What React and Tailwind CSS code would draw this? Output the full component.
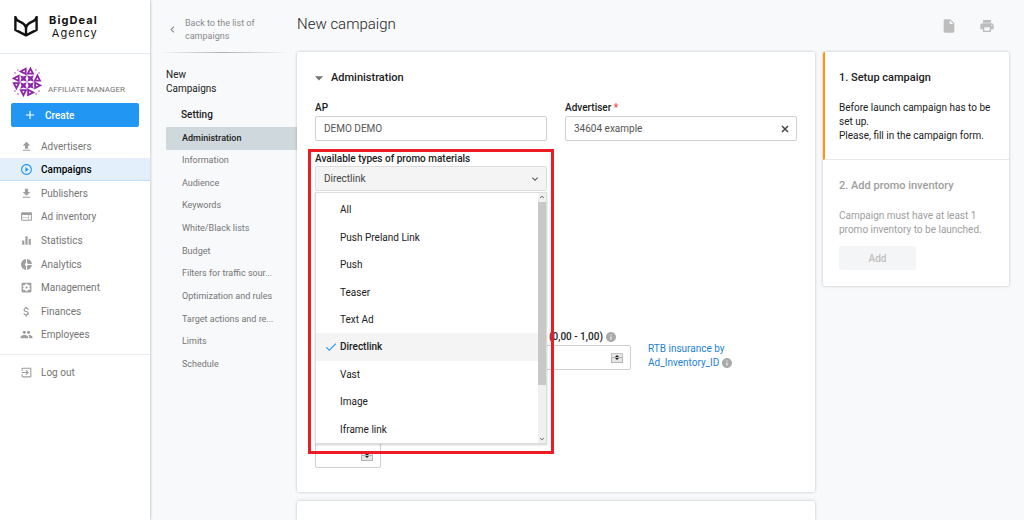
import { useState } from "react";
import {
  MdUpload, MdPlayCircleOutline, MdGetApp, MdWeb, MdEqualizer, MdDonutSmall,
  MdSettingsApplications, MdAttachMoney, MdPeople, MdExitToApp, MdAdd,
  MdArrowDropDown, MdInfo, MdInsertDriveFile, MdPrint, MdCheck,
  MdKeyboardArrowDown, MdKeyboardArrowUp, MdKeyboardArrowLeft,
} from "react-icons/md";

const NAV = [
  ["Advertisers", MdUpload],
  ["Campaigns", MdPlayCircleOutline],
  ["Publishers", MdGetApp],
  ["Ad inventory", MdWeb],
  ["Statistics", MdEqualizer],
  ["Analytics", MdDonutSmall],
  ["Management", MdSettingsApplications],
  ["Finances", MdAttachMoney],
  ["Employees", MdPeople],
];

const SECTIONS = [
  "Administration", "Information", "Audience", "Keywords", "White/Black lists", "Budget",
  "Filters for traffic sour...", "Optimization and rules", "Target actions and re...", "Limits", "Schedule",
];

const TYPES = ["All", "Push Preland Link", "Push", "Teaser", "Text Ad", "Directlink", "Vast", "Image", "Iframe link"];

function Logo() {
  return (
    <svg viewBox="0 0 24 21" className="h-[21px] w-6 shrink-0" fill="none" stroke="#111" strokeWidth="2.4" strokeLinejoin="round" aria-hidden="true">
      <path d="M1.4 1V13.9L12 19.4L22.6 13.9V1C22 4.4 19.6 5 17.6 5.9C14.6 7.2 12.8 8.8 12 11.4C11.2 8.8 9.4 7.2 6.4 5.9C4.4 5 2 4.4 1.4 1z" />
      <path d="M12 11V19" />
    </svg>
  );
}

const TRIS = [
  [1, 0, 270], [2, 0, 0], [3, 1, 0], [0, 1, 270], [0, 2, 180], [3, 2, 90], [1, 3, 180], [2, 3, 90],
];

function Avatar() {
  return (
    <svg viewBox="0 0 30 30" className="h-[30px] w-[30px] shrink-0" aria-hidden="true">
      <g fill="none" stroke="#8e24aa" strokeWidth="1.8">
        {TRIS.map(([c, r, a]) => (
          <path key={c + "-" + r} d="M-2.6 2.3L0-2.8L2.6 2.3z" transform={`translate(${4.4 + c * 7} ${4.4 + r * 7}) rotate(${a})`} />
        ))}
      </g>
      <g fill="#8e24aa">
        {[[11.5, 11.5], [18.5, 11.5], [11.5, 18.5], [18.5, 18.5]].map(([x, y]) => (
          <path key={x + "-" + y} d="M-3.3-3.3L0-2L3.3-3.3L2 0L3.3 3.3L0 2L-3.3 3.3L-2 0z" transform={`translate(${x} ${y})`} />
        ))}
        {[[3, 6], [6, 3], [24, 3], [27, 6], [3, 24], [6, 27], [24, 27], [27, 24]].map(([x, y]) => (
          <circle key={x + "-" + y} cx={x} cy={y} r="0.7" />
        ))}
      </g>
    </svg>
  );
}

function Stepper() {
  return (
    <span className="pointer-events-none absolute right-2 top-1/2 flex h-[10px] w-3 -translate-y-1/2 flex-col text-[#222]" aria-hidden="true">
      <span className="flex flex-1 items-end justify-center border border-b-0 border-[#c4c4c4] bg-[#e6e6e6]">
        <svg viewBox="0 0 4 2" className="h-[2px] w-1"><path d="M0 2L2 0L4 2z" fill="currentColor" /></svg>
      </span>
      <span className="flex flex-1 items-start justify-center border border-[#b4b4b4] bg-[#e6e6e6]">
        <svg viewBox="0 0 4 2" className="h-[2px] w-1"><path d="M0 0L2 2L4 0z" fill="currentColor" /></svg>
      </span>
    </span>
  );
}

function Sidebar() {
  return (
    <aside className="z-10 w-[150px] shrink-0 bg-white shadow-[0_0_3px_rgba(0,0,0,0.3)]">
      <div className="flex h-[53px] items-center gap-[11px] pl-[14px]">
        <Logo />
        <p className="text-right font-[Inter,sans-serif] text-[11px] leading-[13px] tracking-widest text-[#111]">
          <strong className="block font-bold">BigDeal</strong>
          <span className="block">Agency</span>
        </p>
      </div>
      <div className="h-px bg-[#e3eaf0]" />
      <div className="flex items-end gap-[6px] pl-3 pt-[13px] text-[#757575]">
        <Avatar />
        <span className="whitespace-nowrap text-[8px] leading-[15px]">AFFILIATE MANAGER</span>
      </div>
      <div className="px-[11px] pt-[6px]">
        <button className="flex h-6 w-full items-center gap-2 rounded-[2px] bg-[#2196f3] pl-3 font-medium text-white">
          <MdAdd className="size-[14px]" />
          Create
        </button>
      </div>
      <nav className="mt-[7px] grid h-[212px] grid-rows-9">
        {NAV.map(([label, Icon]) => {
          const active = label === "Campaigns";
          return (
            <a key={label} href="#" className={active ? "flex items-center gap-2 border-b border-[#bbdefb] bg-[#e3f0fb] pl-5 pt-px font-medium text-black" : "flex items-center gap-2 pl-5 pt-px text-[#757575]"}>
              <Icon className={active ? "size-[13px] text-[#2196f3]" : "size-[13px] text-[#9e9e9e]"} />
              {label}
            </a>
          );
        })}
      </nav>
      <div className="mt-2 h-px bg-[#e8edf1]" />
      <a href="#" className="mt-[5px] flex h-6 items-center gap-2 pl-5 text-[#757575]">
        <MdExitToApp className="size-[13px] text-[#9e9e9e]" />
        Log out
      </a>
    </aside>
  );
}

function CampaignNav() {
  return (
    <div className="w-[147px] shrink-0 pl-4">
      <a href="#" className="flex h-[52px] items-center gap-[6px] pt-[7px] text-[9px] leading-[13px] text-[#8a8a8a]">
        <MdKeyboardArrowLeft className="size-[13px] shrink-0" />
        <span>Back to the list of<br />campaigns</span>
      </a>
      <div className="-ml-2 mr-2 h-px bg-linear-to-r from-transparent via-[#b0b0b0] to-transparent" />
      <p className="mt-[15px] leading-[14px] text-[#212121]">New<br />Campaigns</p>
      <p className="mt-[11px] pl-[15px] font-medium leading-[16px] text-[#212121]">Setting</p>
      <nav className="mt-1 grid h-[249px] grid-rows-11 text-[9px]">
        {SECTIONS.map((s, i) => (
          <a key={s} href="#" className={i === 0 ? "flex items-center bg-[#cfd8dc] pl-4 font-medium text-[#212121]" : "flex items-center pl-4 text-[#757575]"}>
            {s}
          </a>
        ))}
      </nav>
    </div>
  );
}

function TypeMenu({ value, onPick }) {
  return (
    <div className="absolute inset-x-0 top-full z-10 mt-px flex border border-[#ddd] bg-white shadow-[0_1px_2px_rgba(0,0,0,0.2)]">
      <ul role="listbox" aria-label="Available types of promo materials" className="grid h-[250px] flex-1 grid-rows-9 pt-[3px]">
        {TYPES.map((t) => (
          <li key={t} role="option" aria-selected={t === value} onClick={() => onPick(t)} className={t === value ? "flex items-center bg-[#f4f4f4] pl-2 font-medium text-[#212121]" : "flex items-center pl-6 text-[#212121]"}>
            {t === value && <MdCheck className="mr-[2px] size-[14px] text-[#2196f3]" />}
            {t}
          </li>
        ))}
      </ul>
      <div className="flex w-2 flex-col items-center bg-[#f0f0f0] text-[#444]" aria-hidden="true">
        <MdKeyboardArrowUp className="size-2" />
        <span className="mt-px h-[183px] w-full bg-[#c8c8c8]" />
        <MdKeyboardArrowDown className="mt-auto size-2" />
      </div>
    </div>
  );
}

function Form() {
  const [type, setType] = useState("Directlink");
  const field = "h-[25px] w-full rounded-[2px] border border-[#d0d0d0] bg-white px-2 text-[#555]";
  return (
    <section className="h-[440px] rounded-[2px] bg-white px-[18px] pt-[18px] shadow-[0_0_3px_rgba(0,0,0,0.25)]">
      <h2 className="flex h-4 items-center gap-[2px] text-[11px] font-medium leading-4 text-[#212121]">
        <MdArrowDropDown className="-ml-[6px] size-5 text-[#757575]" />
        Administration
      </h2>
      <div className="mt-[15px] grid grid-cols-2 gap-x-[18px]">
        <div>
          <label htmlFor="ap" className="block font-medium leading-[14px]">AP</label>
          <input id="ap" defaultValue="DEMO DEMO" className={"mt-px " + field} />
        </div>
        <div>
          <label htmlFor="adv" className="block font-medium leading-[14px]">Advertiser <span className="text-[#f44336]">*</span></label>
          <div className="relative mt-px">
            <input id="adv" defaultValue="34604 example" className={field} />
            <button aria-label="Clear" className="absolute inset-y-0 right-2 text-[#444]">
              <svg viewBox="0 0 8 8" className="size-2" fill="none" stroke="currentColor" strokeWidth="1.5"><path d="M1 1L7 7M7 1L1 7" /></svg>
            </button>
          </div>
        </div>
        <div className="relative mt-[11px]">
          <label htmlFor="type" className="block font-medium leading-[14px]">Available types of promo materials</label>
          <div className="relative">
            <select id="type" value={type} onChange={(e) => setType(e.target.value)} className="block h-[25px] w-full appearance-none rounded-[2px] border border-[#ddd] bg-[#f4f4f4] px-2 text-[#444]">
              {TYPES.map((t) => <option key={t}>{t}</option>)}
            </select>
            <MdKeyboardArrowDown className="pointer-events-none absolute right-[6px] top-[7px] size-3 text-[#555]" />
            <TypeMenu value={type} onPick={setType} />
          </div>
          <div className="pointer-events-none absolute -inset-x-[7px] -top-[3px] z-20 h-[305px] border-[3px] border-[#ed1c24]" />
        </div>
      </div>
      <div className="mt-[138px] flex items-start gap-[17px] pl-[226px]">
        <div className="w-[90px]">
          <label htmlFor="coef" className="flex items-center gap-[2px] whitespace-nowrap pl-2 font-medium leading-4">
            (0,00 - 1,00) <MdInfo className="size-3 text-[#aaa]" />
          </label>
          <div className="relative">
            <input id="coef" className={field} />
            <Stepper />
          </div>
        </div>
        <a href="#" className="mt-[13px] leading-[14px] text-[#1e7fd8]">
          RTB insurance by<br />
          <span className="flex items-center gap-[2px]">Ad_Inventory_ID <MdInfo className="size-3 text-[#aaa]" /></span>
        </a>
      </div>
      <div className="relative mt-[73px] w-[66px]">
        <input aria-label="Amount" className={field} />
        <Stepper />
      </div>
    </section>
  );
}

export default function App() {
  return (
    <div className="flex min-h-screen bg-[#f8f9fb] font-[Roboto,sans-serif] text-[10px] text-[#212121]">
      <Sidebar />
      <CampaignNav />
      <div className="flex flex-1 flex-col pr-[15px]">
        <header className="flex h-[52px] shrink-0 items-center justify-between pr-[14px]">
          <h1 className="pb-[3px] text-[15px] font-light text-[#212121]">New campaign</h1>
          <div className="flex gap-[22px] text-[#bdbdbd]">
            <button aria-label="Document"><MdInsertDriveFile className="size-4" /></button>
            <button aria-label="Print"><MdPrint className="size-4" /></button>
          </div>
        </header>
        <div className="flex flex-1 items-stretch gap-2">
          <main className="flex flex-1 flex-col gap-[9px]">
            <Form />
            <section className="flex-1 rounded-t-[2px] bg-white shadow-[0_0_3px_rgba(0,0,0,0.25)]" />
          </main>
          <aside className="w-[186px] shrink-0 self-start rounded-[2px] bg-white shadow-[0_0_3px_rgba(0,0,0,0.25)]">
            <section className="h-[108px] rounded-tl-[2px] border-b border-l-2 border-b-[#eaeaea] border-l-[#ff9800] pl-[14px] pr-4 pt-[18px]">
              <h2 className="text-[11px] font-medium leading-4">1. Setup campaign</h2>
              <p className="mt-[15px] leading-[14px]">Before launch campaign has to be set up.<br />Please, fill in the campaign form.</p>
            </section>
            <section className="h-[126px] pl-4 pr-4 pt-[18px] text-[#9e9e9e]">
              <h2 className="text-[11px] font-medium leading-4">2. Add promo inventory</h2>
              <p className="mt-[15px] leading-[14px]">Campaign must have at least 1 promo inventory to be launched.</p>
              <button disabled className="mt-[9px] h-6 w-[77px] rounded-[2px] bg-[#f4f5f6] font-medium text-[#c0c0c0]">Add</button>
            </section>
          </aside>
        </div>
      </div>
    </div>
  );
}
